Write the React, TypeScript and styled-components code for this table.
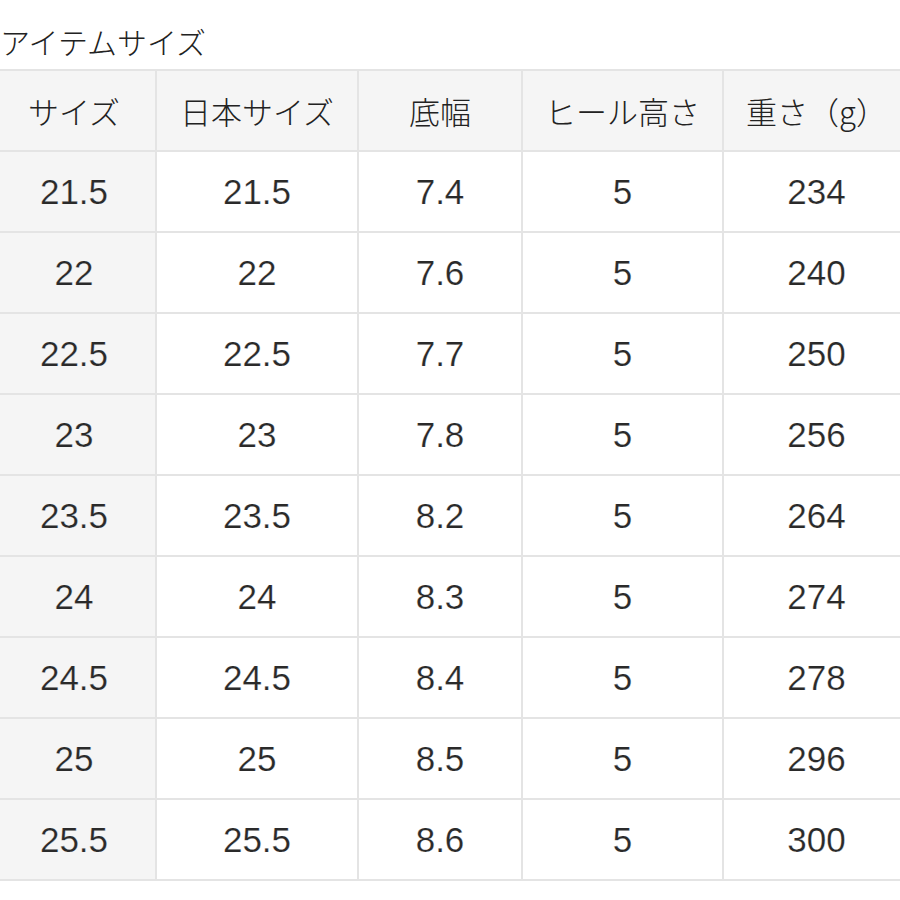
import React from 'react';
import styled, { createGlobalStyle } from 'styled-components';

const GlobalStyle = createGlobalStyle`
  html, body {
    margin: 0;
    padding: 0;
    background: #ffffff;
    overflow: hidden;
  }
  body {
    font-family: "Liberation Sans", "Noto Sans CJK JP", sans-serif;
    color: #222222;
  }
`;

const Page = styled.div`
  width: 920px;
  margin-left: -9px;
`;

const Title = styled.div`
  font-family: "Noto Sans CJK JP", sans-serif;
  font-weight: 300;
  font-size: 30px;
  line-height: 40px;
  height: 69px;
  padding: 21px 0 0 9px;
  box-sizing: border-box;
  white-space: nowrap;
`;

const Table = styled.table`
  border-collapse: collapse;
  table-layout: fixed;
  width: 918px;
`;

const HeadCell = styled.th`
  height: 81px;
  box-sizing: border-box;
  background: #f5f5f5;
  border: 2px solid #e4e4e4;
  font-family: "Noto Sans CJK JP", sans-serif;
  font-weight: 300;
  font-size: 31px;
  text-align: center;
  vertical-align: middle;
  padding: 0;
`;

const Cell = styled.td<{ $first?: boolean }>`
  height: 81px;
  box-sizing: border-box;
  background: ${(p) => (p.$first ? '#f5f5f5' : '#ffffff')};
  border: 2px solid #e4e4e4;
  font-family: "Liberation Sans", "Noto Sans CJK JP", sans-serif;
  font-size: 35px;
  color: #2a2a2a;
  -webkit-text-stroke: 0.2px #ffffff;
  text-align: center;
  vertical-align: middle;
  padding: 0;
`;

const headers = ['サイズ', '日本サイズ', '底幅', 'ヒール高さ', '重さ（g）'];
const widths = [164, 202, 164, 201, 187];

const rows = [
  ['21.5', '21.5', '7.4', '5', '234'],
  ['22', '22', '7.6', '5', '240'],
  ['22.5', '22.5', '7.7', '5', '250'],
  ['23', '23', '7.8', '5', '256'],
  ['23.5', '23.5', '8.2', '5', '264'],
  ['24', '24', '8.3', '5', '274'],
  ['24.5', '24.5', '8.4', '5', '278'],
  ['25', '25', '8.5', '5', '296'],
  ['25.5', '25.5', '8.6', '5', '300'],
];

export default function App() {
  return (
    <Page>
      <GlobalStyle />
      <Title>アイテムサイズ</Title>
      <Table>
        <colgroup>
          {widths.map((w, i) => (
            <col key={i} style={{ width: w }} />
          ))}
        </colgroup>
        <thead>
          <tr>
            {headers.map((h) => (
              <HeadCell key={h}>{h}</HeadCell>
            ))}
          </tr>
        </thead>
        <tbody>
          {rows.map((r, i) => (
            <tr key={i}>
              {r.map((v, j) => (
                <Cell key={j} $first={j === 0}>
                  {v}
                </Cell>
              ))}
            </tr>
          ))}
        </tbody>
      </Table>
    </Page>
  );
}
